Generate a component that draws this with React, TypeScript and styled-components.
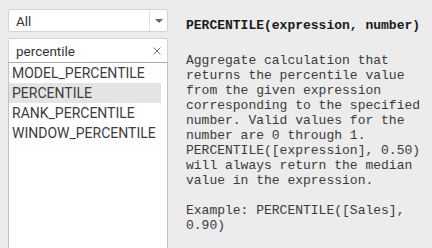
import React from 'react';
import styled, { createGlobalStyle } from 'styled-components';

const GlobalStyle = createGlobalStyle`
  html, body {
    margin: 0;
    padding: 0;
    background: #ececec;
    overflow: hidden;
  }
`;

const Page = styled.div`
  display: flex;
  height: 248px;
  font-family: Roboto, 'Liberation Sans', sans-serif;
`;

const LeftColumn = styled.div`
  display: flex;
  flex-direction: column;
  width: 160px;
  padding: 9px 0 0 8px;
`;

const SelectBox = styled.div`
  display: flex;
  height: 23px;
  box-sizing: border-box;
  border: 1px solid #d4d4d4;
  border-radius: 2px;
  background: #fff;
  font-size: 13.5px;
  color: #333;
`;

const SelectValue = styled.div`
  flex: 1;
  display: flex;
  align-items: center;
  padding-left: 7px;
`;

const SelectArrow = styled.div`
  width: 17px;
  display: flex;
  align-items: center;
  justify-content: center;
  border-left: 1px solid #e2e2e2;
  &::after {
    content: '';
    border-left: 4px solid transparent;
    border-right: 4px solid transparent;
    border-top: 4px solid #666;
  }
`;

const SearchBox = styled.div`
  display: flex;
  align-items: center;
  height: 24px;
  margin-top: 6px;
  box-sizing: border-box;
  border: 1px solid #d4d4d4;
  border-bottom: none;
  border-radius: 2px 2px 0 0;
  background: #fff;
  padding: 0 6px 0 7px;
  font-size: 13.5px;
  color: #333;
`;

const SearchText = styled.span`
  flex: 1;
`;

const ClearIcon = styled.svg`
  width: 8px;
  height: 8px;
`;

const List = styled.div`
  flex: 1;
  box-sizing: border-box;
  border: 1px solid #c2c2c2;
  border-top: 1px solid #a8a8a8;
  border-bottom: none;
  background: #fff;
  padding-right: 6px;
`;

const ListItem = styled.div<{ $selected?: boolean }>`
  height: 20px;
  line-height: 20px;
  padding-left: 3px;
  font-size: 14px;
  color: #3c3c3c;
  background: ${(p) => (p.$selected ? '#e4e4e4' : 'transparent')};
`;

const Help = styled.div`
  padding: 18px 0 0 18px;
  width: 240px;
  font-family: 'Liberation Mono', 'Courier New', monospace;
  font-size: 13px;
  line-height: 15px;
  color: #3a3a3a;
`;

const Signature = styled.div`
  font-weight: bold;
  color: #1a1a1a;
  margin-bottom: 20px;
`;

const Paragraph = styled.p`
  margin: 0 0 15px 0;
`;

const items = ['MODEL_PERCENTILE', 'PERCENTILE', 'RANK_PERCENTILE', 'WINDOW_PERCENTILE'];

export default function App() {
  return (
    <>
      <GlobalStyle />
      <Page>
        <LeftColumn>
          <SelectBox>
            <SelectValue>All</SelectValue>
            <SelectArrow />
          </SelectBox>
          <SearchBox>
            <SearchText>percentile</SearchText>
            <ClearIcon viewBox="0 0 8 8">
              <path d="M0.5 0.5 L7.5 7.5 M7.5 0.5 L0.5 7.5" stroke="#777" strokeWidth="1" />
            </ClearIcon>
          </SearchBox>
          <List>
            {items.map((name) => (
              <ListItem key={name} $selected={name === 'PERCENTILE'}>
                {name}
              </ListItem>
            ))}
          </List>
        </LeftColumn>
        <Help>
          <Signature>PERCENTILE(expression, number)</Signature>
          <Paragraph>
            Aggregate calculation that returns the percentile value from the given expression
            corresponding to the specified number. Valid values for the number are 0 through 1.
            PERCENTILE([expression], 0.50) will always return the median value in the expression.
          </Paragraph>
          <Paragraph>Example: PERCENTILE([Sales], 0.90)</Paragraph>
        </Help>
      </Page>
    </>
  );
}
